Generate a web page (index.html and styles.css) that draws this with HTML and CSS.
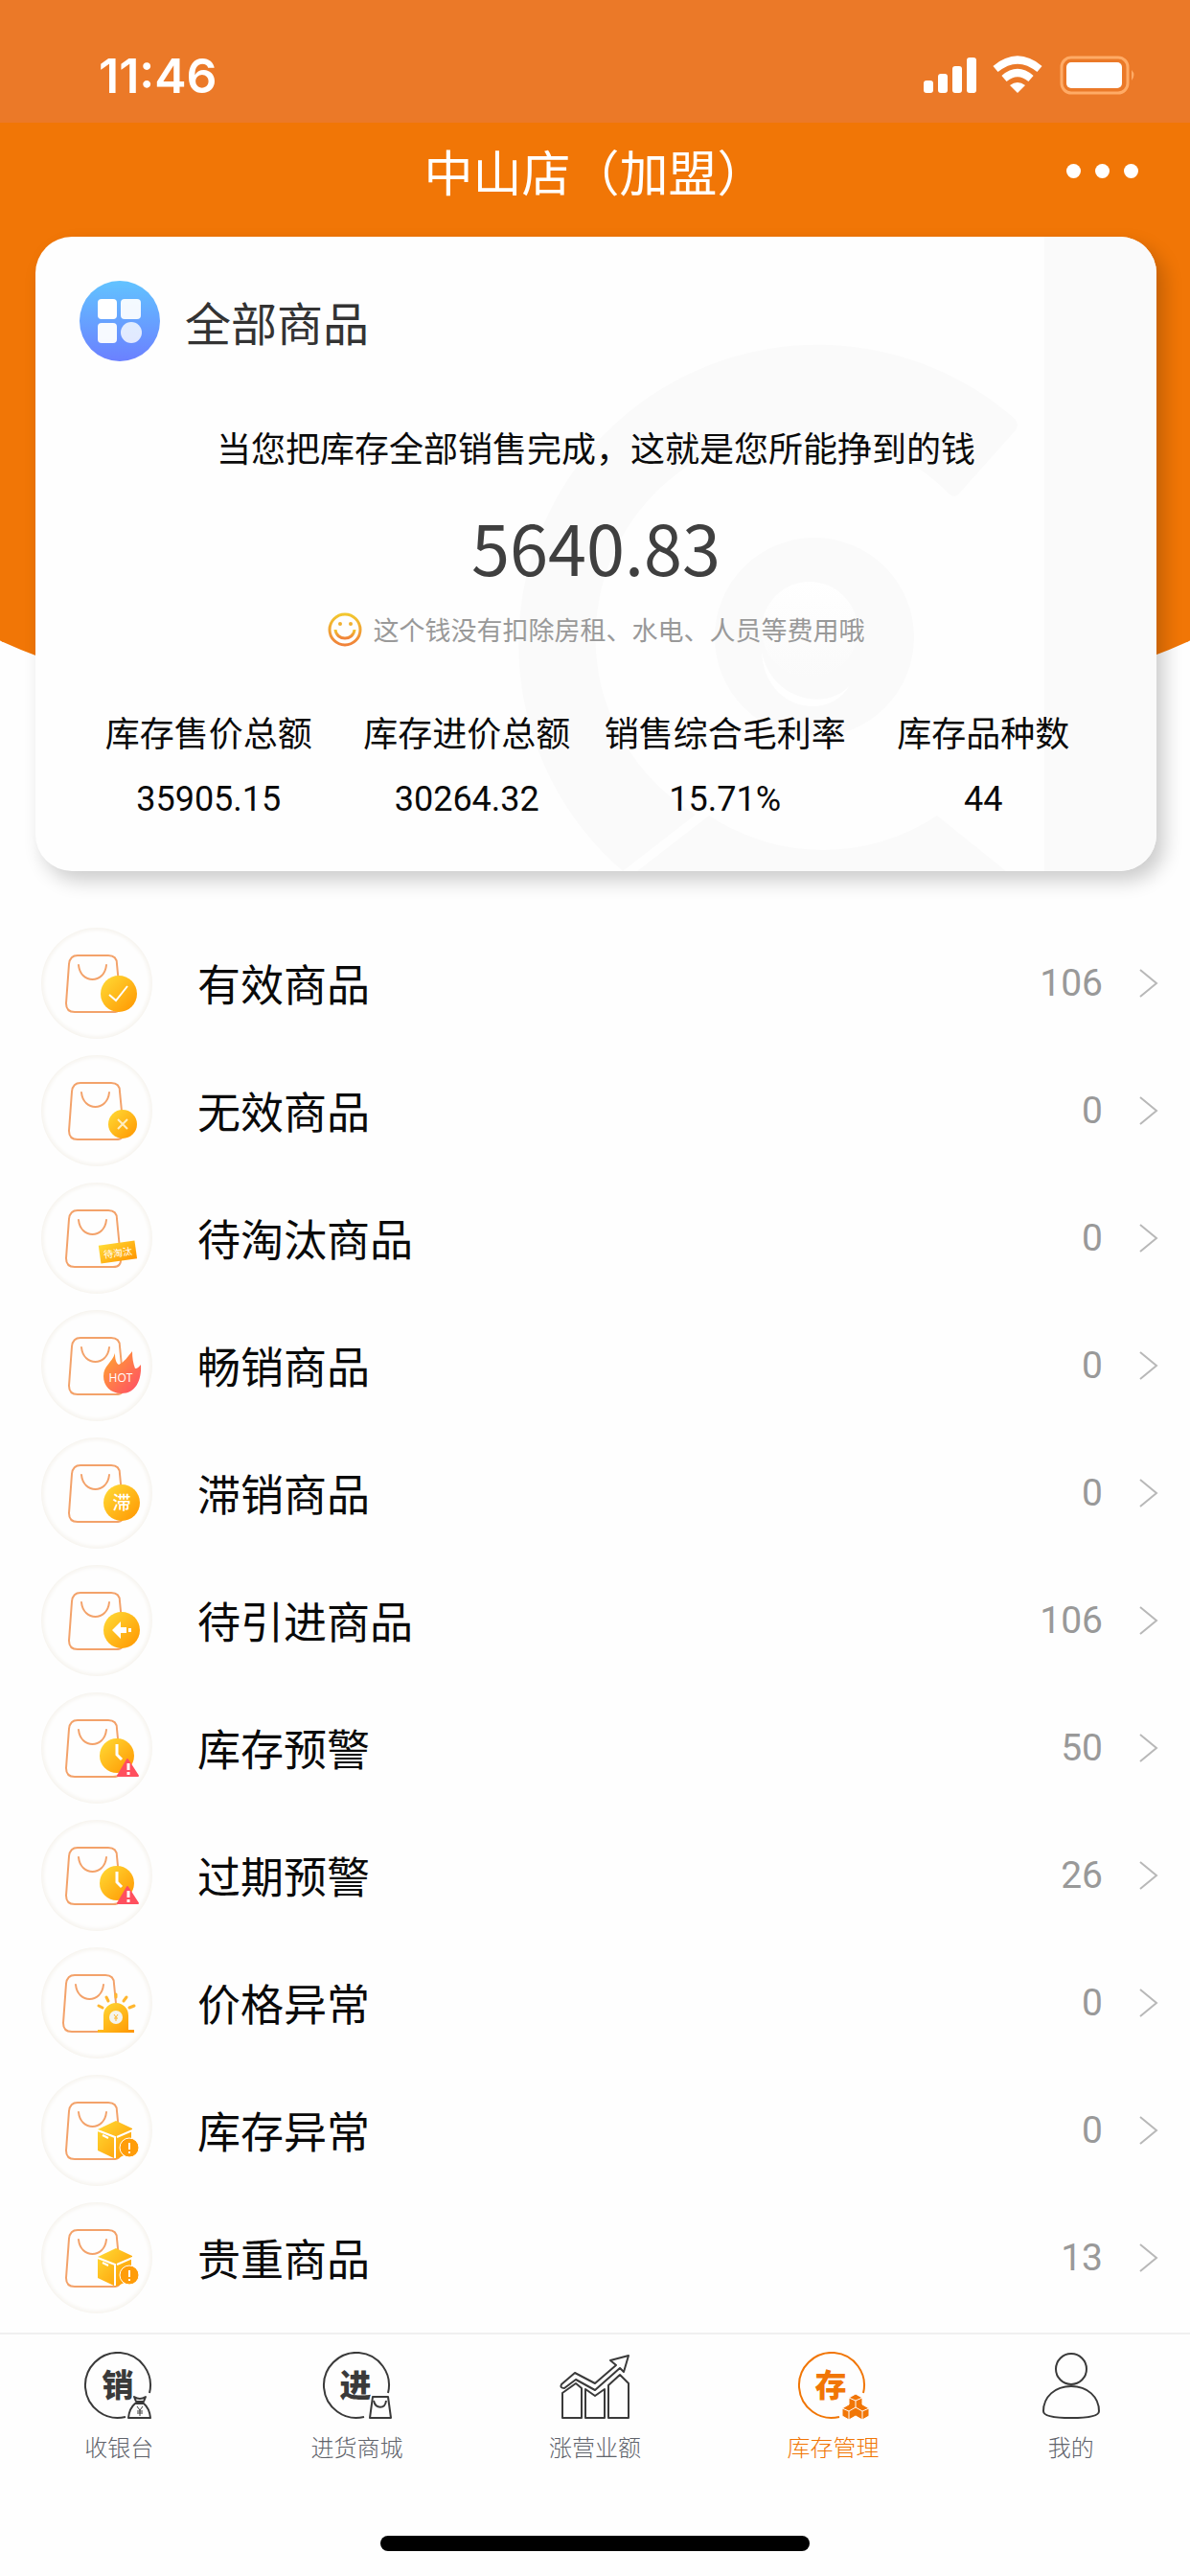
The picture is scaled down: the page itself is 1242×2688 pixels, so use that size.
FILE: index.html
```html
<!DOCTYPE html>
<html lang="zh-CN">
<head>
    <meta charset="UTF-8">
    <meta name="viewport" content="width=device-width, initial-scale=1.0">
    <title>库存管理</title>
    <link rel="stylesheet" href="styles.css">
</head>
<body>

    <!-- shared icon parts -->
    <svg class="defs" width="0" height="0" aria-hidden="true">
        <defs>
            <linearGradient id="gold" x1="0" y1="0" x2="1" y2="1">
                <stop offset="0" stop-color="#ffdc36"/>
                <stop offset="1" stop-color="#ff9500"/>
            </linearGradient>
            <linearGradient id="fire" x1="0" y1="0" x2="1" y2="1">
                <stop offset="0" stop-color="#ffa92e"/>
                <stop offset="1" stop-color="#ff4a68"/>
            </linearGradient>
            <linearGradient id="blue" x1="0" y1="0" x2="0" y2="1">
                <stop offset="0" stop-color="#62c3ff"/>
                <stop offset="1" stop-color="#6b80ff"/>
            </linearGradient>
            <linearGradient id="smile" x1="0" y1="0" x2="0" y2="1">
                <stop offset="0" stop-color="#f2c72e"/>
                <stop offset="1" stop-color="#f0823a"/>
            </linearGradient>
            <linearGradient id="fade" x1="0" y1="0" x2="0" y2="1">
                <stop offset="0" stop-color="#fff"/>
                <stop offset="1" stop-color="#fafafa"/>
            </linearGradient>
            <symbol id="bag" viewBox="0 0 116 116">
                <g fill="none" stroke="#f3a26a" stroke-width="2" stroke-linecap="round">
                    <path d="M38 29H70Q79 29 79 38L83 79Q84 88 75 88H35Q26 88 26 79L29 38Q30 29 38 29Z"/>
                    <path d="M39 39C41 59 66 59 68 39"/>
                </g>
            </symbol>
            <symbol id="clock" viewBox="0 0 116 116">
                <circle cx="79" cy="66" r="18" fill="url(#gold)"/>
                <path d="M79 54V65L84 70" fill="none" stroke="#fff" stroke-width="3"/>
                <path d="M90 70L101 87H80Z" fill="#ff4f5e" stroke="#ff4f5e" stroke-width="2" stroke-linejoin="round"/>
                <path d="M91 74V81M91 83V86" stroke="#fff" stroke-width="3"/>
            </symbol>
            <symbol id="box" viewBox="0 0 116 116">
                <path d="M59 57L78 48L95 56V80L78 88L59 79Z" fill="url(#gold)"/>
                <path d="M59 58L77 65V87M79 65L95 58V68" fill="none" stroke="#fff" stroke-width="2"/>
                <path d="M64 63L70 66" stroke="#fff" stroke-width="2"/>
                <circle cx="92" cy="76" r="10" fill="#ff9d0a" stroke="#fff" stroke-width="1"/>
                <path d="M92 71V78M92 80V82" stroke="#fff" stroke-width="2"/>
            </symbol>
        </defs>
    </svg>

    <div class="hero">
        <div class="status-bar">
            <span class="time">11:46</span>
            <svg width="224" height="42" viewBox="0 0 224 42" fill="#fff" aria-hidden="true">
                <rect x="2" y="26" width="10" height="13" rx="3"/>
                <rect x="17" y="19" width="10" height="20" rx="3"/>
                <rect x="32" y="11" width="10" height="28" rx="3"/>
                <rect x="47" y="2" width="10" height="37" rx="3"/>
                <g fill="none" stroke="#fff" stroke-width="8">
                    <path d="M77 14Q100 -5 123 14"/>
                    <path d="M86 24Q100 12 114 24"/>
                </g>
                <path d="M92 31Q100 25 108 31L100 39Z"/>
                <rect x="146" y="2" width="69" height="37" rx="10" fill="none" stroke="#ffab66" stroke-width="3"/>
                <rect x="151" y="7" width="58" height="27" rx="5"/>
                <path d="M219 15Q224 20 219 26Z" fill="#ffab66"/>
            </svg>
        </div>

        <header class="nav">
            <h1>中山店（加盟）</h1>
            <button class="more" type="button" aria-label="更多">
                <i></i><i></i><i></i>
            </button>
        </header>

        <section class="card">
            <svg class="watermark" viewBox="0 0 1170 662" preserveAspectRatio="xMaxYMid slice" aria-hidden="true">
                <rect x="1053" width="117" height="662" fill="#fafafa"/>
                <g fill="#fafafa">
                    <path d="M1020 188Q1028 195 1023 202L965 267Q960 274 953 268A215 215 0 1 0 689 603L613 662A310 310 0 0 1 1020 188Z"/>
                    <path d="M703 604A215 215 0 0 0 941 604L1013 662H628Z"/>
                    <circle cx="813" cy="418" r="104"/>
                </g>
                <circle cx="808" cy="410" r="50" fill="url(#fade)"/>
                <path d="M758 433C760 492 826 508 850 468C826 496 768 484 758 433Z" fill="#fff"/>
            </svg>

            <div class="card-head">
                <svg width="84" height="84" viewBox="0 0 84 84" aria-hidden="true">
                    <circle cx="42" cy="42" r="42" fill="url(#blue)"/>
                    <g fill="#fff">
                        <rect x="19" y="19" width="20" height="21" rx="4"/>
                        <rect x="43" y="19" width="21" height="21" rx="4" opacity=".93"/>
                        <rect x="19" y="44" width="20" height="21" rx="4" opacity=".95"/>
                        <circle cx="54" cy="54" r="11" opacity=".8"/>
                    </g>
                </svg>
                <h2>全部商品</h2>
            </div>

            <p class="slogan">当您把库存全部销售完成，这就是您所能挣到的钱</p>
            <p class="amount">5640.83</p>
            <p class="note">
                <svg width="36" height="36" viewBox="0 0 36 36" aria-hidden="true">
                    <circle cx="18" cy="18" r="16" fill="none" stroke="url(#smile)" stroke-width="3"/>
                    <circle cx="13" cy="12" r="2" fill="#f0b030"/>
                    <circle cx="24" cy="12" r="2" fill="#f0b030"/>
                    <path d="M8 18C9 30 27 30 28 18" fill="none" stroke="url(#smile)" stroke-width="3"/>
                </svg>
                这个钱没有扣除房租、水电、人员等费用哦
            </p>

            <dl class="stats">
                <div><dt>库存售价总额</dt><dd>35905.15</dd></div>
                <div><dt>库存进价总额</dt><dd>30264.32</dd></div>
                <div><dt>销售综合毛利率</dt><dd>15.71%</dd></div>
                <div><dt>库存品种数</dt><dd>44</dd></div>
            </dl>
        </section>
    </div>

    <main class="list">
        <a class="row" href="#">
            <svg class="icon" viewBox="0 0 116 116" aria-hidden="true">
                <use href="#bag"/>
                <circle cx="81" cy="69" r="19" fill="url(#gold)"/>
                <path d="M71 70L78 76L90 61" fill="none" stroke="#fff" stroke-width="2"/>
            </svg>
            <span class="name">有效商品</span><span class="count">106</span>
            <svg class="arrow" viewBox="0 0 20 30" aria-hidden="true"><path d="M1 1L18 15L1 29"/></svg>
        </a>
        <a class="row" href="#">
            <svg class="icon" viewBox="0 0 116 116" aria-hidden="true">
                <use href="#bag" x="3"/>
                <circle cx="85" cy="72" r="15" fill="url(#gold)"/>
                <path d="M80 67L90 77M90 67L80 77" stroke="#ffeec2" stroke-width="2"/>
            </svg>
            <span class="name">无效商品</span><span class="count">0</span>
            <svg class="arrow" viewBox="0 0 20 30" aria-hidden="true"><path d="M1 1L18 15L1 29"/></svg>
        </a>
        <a class="row" href="#">
            <svg class="icon" viewBox="0 0 116 116" aria-hidden="true">
                <use href="#bag"/>
                <g transform="rotate(-8 80 73)">
                    <rect x="61" y="63" width="38" height="19" fill="url(#gold)"/>
                    <text class="tag-text" x="80" y="77">待淘汰</text>
                </g>
            </svg>
            <span class="name">待淘汰商品</span><span class="count">0</span>
            <svg class="arrow" viewBox="0 0 20 30" aria-hidden="true"><path d="M1 1L18 15L1 29"/></svg>
        </a>
        <a class="row" href="#">
            <svg class="icon" viewBox="0 0 116 116" aria-hidden="true">
                <use href="#bag" x="3"/>
                <path d="M77 45C77 51 78 55 81 57C87 54 90 49 95 43C95 50 96 56 98 61C101 61 102 59 104 57C105 74 98 87 84 87C72 87 65 79 65 69C65 58 74 55 77 45Z" fill="url(#fire)"/>
                <text class="hot-text" x="83" y="75">HOT</text>
            </svg>
            <span class="name">畅销商品</span><span class="count">0</span>
            <svg class="arrow" viewBox="0 0 20 30" aria-hidden="true"><path d="M1 1L18 15L1 29"/></svg>
        </a>
        <a class="row" href="#">
            <svg class="icon" viewBox="0 0 116 116" aria-hidden="true">
                <use href="#bag" x="3"/>
                <circle cx="84" cy="68" r="19" fill="url(#gold)"/>
                <text class="slow-text" x="84" y="75">滞</text>
            </svg>
            <span class="name">滞销商品</span><span class="count">0</span>
            <svg class="arrow" viewBox="0 0 20 30" aria-hidden="true"><path d="M1 1L18 15L1 29"/></svg>
        </a>
        <a class="row" href="#">
            <svg class="icon" viewBox="0 0 116 116" aria-hidden="true">
                <use href="#bag" x="3"/>
                <circle cx="84" cy="68" r="19" fill="url(#gold)"/>
                <path d="M74 68L83 59V65H89V71H83V77ZM91 66H94V70H91Z" fill="#fff"/>
            </svg>
            <span class="name">待引进商品</span><span class="count">106</span>
            <svg class="arrow" viewBox="0 0 20 30" aria-hidden="true"><path d="M1 1L18 15L1 29"/></svg>
        </a>
        <a class="row" href="#">
            <svg class="icon" viewBox="0 0 116 116" aria-hidden="true">
                <use href="#bag"/>
                <use href="#clock"/>
            </svg>
            <span class="name">库存预警</span><span class="count">50</span>
            <svg class="arrow" viewBox="0 0 20 30" aria-hidden="true"><path d="M1 1L18 15L1 29"/></svg>
        </a>
        <a class="row" href="#">
            <svg class="icon" viewBox="0 0 116 116" aria-hidden="true">
                <use href="#bag"/>
                <use href="#clock"/>
            </svg>
            <span class="name">过期预警</span><span class="count">26</span>
            <svg class="arrow" viewBox="0 0 20 30" aria-hidden="true"><path d="M1 1L18 15L1 29"/></svg>
        </a>
        <a class="row" href="#">
            <svg class="icon" viewBox="0 0 116 116" aria-hidden="true">
                <use href="#bag" x="-3"/>
                <path d="M65 86V71A13 13 0 0 1 91 71V86H97V89H59V86Z" fill="url(#gold)"/>
                <circle cx="78" cy="73" r="7" fill="#f4f4ee"/>
                <path d="M76 70L78 73L80 70M78 73V77M76 74H80" fill="none" stroke="#ffb62e" stroke-width="1"/>
                <path d="M60 61L64 63M68 52L70 56M78 49V52M89 52L86 56M97 61L92 63" stroke="#ffb62e" stroke-width="3" stroke-linecap="round"/>
            </svg>
            <span class="name">价格异常</span><span class="count">0</span>
            <svg class="arrow" viewBox="0 0 20 30" aria-hidden="true"><path d="M1 1L18 15L1 29"/></svg>
        </a>
        <a class="row" href="#">
            <svg class="icon" viewBox="0 0 116 116" aria-hidden="true">
                <use href="#bag"/>
                <use href="#box"/>
            </svg>
            <span class="name">库存异常</span><span class="count">0</span>
            <svg class="arrow" viewBox="0 0 20 30" aria-hidden="true"><path d="M1 1L18 15L1 29"/></svg>
        </a>
        <a class="row" href="#">
            <svg class="icon" viewBox="0 0 116 116" aria-hidden="true">
                <use href="#bag"/>
                <use href="#box"/>
            </svg>
            <span class="name">贵重商品</span><span class="count">13</span>
            <svg class="arrow" viewBox="0 0 20 30" aria-hidden="true"><path d="M1 1L18 15L1 29"/></svg>
        </a>
    </main>

    <footer class="footer">
        <nav class="tabs">
            <a class="tab" href="#">
                <svg viewBox="0 0 76 72" aria-hidden="true">
                    <path d="M70 43A34 34 0 1 0 45 68"/>
                    <text class="tab-char" x="37" y="47">销</text>
                    <path class="cover" d="M53 45H68L66 52Q71 56 71 69H47Q47 56 55 52Z"/>
                    <path class="thin" d="M54 47Q60 51 66 47L64 52H56ZM55 54H64Q70 59 71 69H48Q49 59 55 54Z"/>
                    <path class="hair" d="M57 57L60 61L63 57M60 61V67M57 62H63M57 64H63"/>
                </svg>
                <span>收银台</span>
            </a>
            <a class="tab" href="#">
                <svg viewBox="0 0 76 72" aria-hidden="true">
                    <path d="M70 43A34 34 0 1 0 45 68"/>
                    <text class="tab-char" x="36" y="47">进</text>
                    <path class="cover" d="M52 45H72L75 71H49Z"/>
                    <path class="thin" d="M54 47H70L73 69H51Z"/>
                    <path class="thin" d="M55 51C57 60 67 60 68 51"/>
                </svg>
                <span>进货商城</span>
            </a>
            <a class="tab" href="#">
                <svg viewBox="0 0 76 72" aria-hidden="true">
                    <path d="M4 69V43L18 33L24 38V69ZM28 69V39L38 46L48 39V69ZM52 69V35L64 24L73 33V69Z"/>
                    <path d="M3 34L17 22L38 33L60 14L54 9L73 4L68 21L64 17L38 40L18 29L6 38Q1 38 3 34Z"/>
                </svg>
                <span>涨营业额</span>
            </a>
            <a class="tab active" href="#" aria-current="page">
                <svg viewBox="0 0 76 72" aria-hidden="true">
                    <path d="M70 43A34 34 0 1 0 45 68"/>
                    <text class="tab-char" x="36" y="47">存</text>
                    <path class="solid" d="M62 44L69 48V55L76 59V67L69 71L62 67L55 71L48 67V59L55 55V48Z"/>
                    <path class="split" d="M55 48L62 51L69 48M62 51V58M48 59L55 62L62 58L69 62L76 59M55 62V71M69 62V71"/>
                </svg>
                <span>库存管理</span>
            </a>
            <a class="tab" href="#">
                <svg viewBox="0 0 76 72" aria-hidden="true">
                    <circle cx="38" cy="18" r="16"/>
                    <path d="M38 36C21 36 9 47 9 62Q9 69 38 69Q67 69 67 62C67 47 55 36 38 36Z"/>
                </svg>
                <span>我的</span>
            </a>
        </nav>
        <div class="home-bar"></div>
    </footer>

</body>
</html>
```

FILE: styles.css
```css
* {
    box-sizing: border-box;
    margin: 0;
    padding: 0;
}

body {
    min-height: 100vh;
    display: flex;
    flex-direction: column;
    background-color: #fefefe;
    color: #0a0a0a;
    font-family: "Noto Sans CJK SC", sans-serif;
    overflow-x: hidden;
}

a {
    color: inherit;
    text-decoration: none;
}

.defs {
    position: absolute;
}

/* orange area, curved at the bottom behind the card */
.hero {
    position: relative;
    z-index: 0;
    overflow-x: clip;
}

.hero::before {
    content: "";
    position: absolute;
    z-index: -1;
    top: 0;
    left: -10%;
    width: 120%;
    height: 770px;
    background-color: #f17606;
    border-radius: 0 0 50% 50% / 0 0 227px 227px;
}

.status-bar {
    display: flex;
    justify-content: space-between;
    align-items: center;
    height: 128px;
    padding: 30px 56px 0 103px;
    background-color: #eb7928;
    color: #fff;
}

.time {
    font-family: Inter, sans-serif;
    font-size: 50px;
    font-weight: 600;
}

.nav {
    display: grid;
    grid-template-columns: 1fr auto 1fr;
    align-items: center;
    height: 100px;
    padding: 0 54px;
    color: #fff;
}

.nav h1 {
    grid-column: 2;
    font-size: 51px;
    font-weight: 400;
}

.more {
    justify-self: end;
    display: flex;
    gap: 15px;
    border: none;
    background: none;
    cursor: pointer;
}

.more i {
    width: 15px;
    height: 15px;
    border-radius: 50%;
    background-color: #fff;
}

.card {
    position: relative;
    z-index: 0;
    margin: 19px 35px 0 37px;
    padding: 46px 46px 50px;
    border-radius: 38px;
    background-color: #fefefe;
    box-shadow: 8px 10px 20px rgba(0, 0, 0, 0.2);
    text-align: center;
}

.watermark {
    position: absolute;
    z-index: -1;
    top: 0;
    left: 0;
    width: 100%;
    height: 100%;
    border-radius: 38px;
}

.card-head {
    display: flex;
    align-items: center;
    gap: 26px;
    height: 84px;
}

.card-head h2 {
    font-size: 48px;
    font-weight: 400;
    color: #333;
}

.slogan {
    margin-top: 64px;
    font-size: 36px;
    line-height: 50px;
}

.amount {
    margin-top: 29px;
    font-size: 72px;
    line-height: 100px;
    color: #3f3f3f;
}

.note {
    display: flex;
    justify-content: center;
    align-items: center;
    gap: 12px;
    margin-top: 17px;
    font-size: 27px;
    line-height: 40px;
    color: #999;
}

.stats {
    display: grid;
    grid-template-columns: repeat(4, 1fr);
    margin-top: 61px;
    font-size: 36px;
    line-height: 50px;
    white-space: nowrap;
}

.stats dd {
    margin-top: 21px;
    font-family: Roboto, sans-serif;
}

.list {
    padding-top: 50px;
}

.row {
    display: flex;
    align-items: center;
    height: 133px;
    padding: 0 33px 0 43px;
}

.icon {
    flex: none;
    width: 116px;
    height: 116px;
    border-radius: 50%;
    box-shadow: inset 0 0 4px 2px #f5f2ec;
}

.tag-text,
.hot-text,
.slow-text {
    fill: #fff;
    text-anchor: middle;
}

.tag-text {
    font-size: 10px;
}

.hot-text {
    font-family: "Open Sans", sans-serif;
    font-size: 12px;
}

.slow-text {
    font-size: 19px;
    font-weight: 500;
}

.name {
    flex: 1;
    margin-left: 47px;
    font-size: 45px;
}

.count {
    font-family: Roboto, sans-serif;
    font-size: 39px;
    color: #999;
}

.arrow {
    width: 20px;
    height: 30px;
    margin-left: 38px;
    fill: none;
    stroke: #b8b8b8;
    stroke-width: 2;
}

.footer {
    margin-top: auto;
    padding-bottom: 26px;
    border-top: 2px solid #f0f0f0;
}

.tabs {
    display: flex;
    padding-top: 18px;
}

.tab {
    flex: 1;
    display: flex;
    flex-direction: column;
    align-items: center;
    gap: 11px;
    font-size: 24px;
    font-weight: 300;
    line-height: 32px;
    color: #5f636b;
}

.tab svg {
    width: 76px;
    height: 72px;
    fill: none;
    stroke: #3a3a3a;
    stroke-width: 2;
    stroke-linejoin: round;
}

.tab .tab-char {
    font-size: 33px;
    font-weight: 900;
    text-anchor: middle;
    fill: #3a3a3a;
    stroke: none;
}

.tab .cover {
    fill: #fefefe;
    stroke: none;
}

.tab .thin {
    stroke-width: 2;
}

.tab .hair {
    stroke-width: 1;
}

.tab.active {
    color: #f17606;
}

.tab.active svg {
    stroke: #f17606;
}

.tab.active .tab-char {
    fill: #f17606;
}

.tab.active .solid {
    fill: #f17606;
    stroke: #fefefe;
    stroke-width: 1;
}

.tab.active .split {
    stroke: #fefefe;
    stroke-width: 1;
}

.home-bar {
    width: 36%;
    height: 16px;
    margin: 77px auto 0;
    border-radius: 8px;
    background-color: #000;
}
```
